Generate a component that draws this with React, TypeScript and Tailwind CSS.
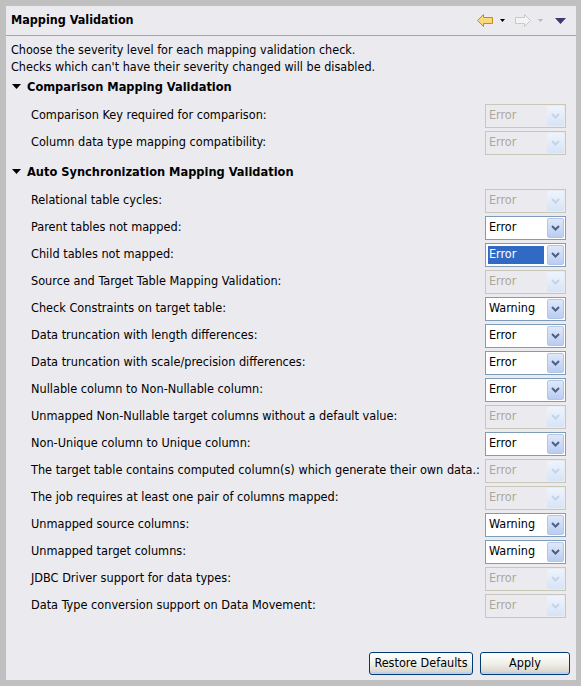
import React from 'react';

type Sev = 'Error' | 'Warning';

interface Row {
  label: string;
  value: Sev;
  disabled?: boolean;
  selected?: boolean;
}

const comparisonRows: Row[] = [
  { label: 'Comparison Key required for comparison:', value: 'Error', disabled: true },
  { label: 'Column data type mapping compatibility:', value: 'Error', disabled: true },
];

const syncRows: Row[] = [
  { label: 'Relational table cycles:', value: 'Error', disabled: true },
  { label: 'Parent tables not mapped:', value: 'Error' },
  { label: 'Child tables not mapped:', value: 'Error', selected: true },
  { label: 'Source and Target Table Mapping Validation:', value: 'Error', disabled: true },
  { label: 'Check Constraints on target table:', value: 'Warning' },
  { label: 'Data truncation with length differences:', value: 'Error' },
  { label: 'Data truncation with scale/precision differences:', value: 'Error' },
  { label: 'Nullable column to Non-Nullable column:', value: 'Error' },
  { label: 'Unmapped Non-Nullable target columns without a default value:', value: 'Error', disabled: true },
  { label: 'Non-Unique column to Unique column:', value: 'Error' },
  { label: 'The target table contains computed column(s) which generate their own data.:', value: 'Error', disabled: true },
  { label: 'The job requires at least one pair of columns mapped:', value: 'Error', disabled: true },
  { label: 'Unmapped source columns:', value: 'Warning' },
  { label: 'Unmapped target columns:', value: 'Warning' },
  { label: 'JDBC Driver support for data types:', value: 'Error', disabled: true },
  { label: 'Data Type conversion support on Data Movement:', value: 'Error', disabled: true },
];

const Chevron: React.FC<{ disabled?: boolean }> = ({ disabled }) => (
  <svg width="9" height="6" viewBox="0 0 9 6">
    <path
      d="M1 1 L4.5 4.5 L8 1"
      fill="none"
      stroke={disabled ? '#c6d3e6' : '#4d6185'}
      strokeWidth="2"
    />
  </svg>
);

const Combo: React.FC<{ row: Row }> = ({ row }) => {
  const { value, disabled, selected } = row;
  return (
    <div
      className={`flex h-[24px] w-[81px] shrink-0 border ${
        disabled ? 'border-[#c9c7ba] bg-[#ebeaef]' : 'border-[#7f9db9] bg-white'
      }`}
    >
      <div className="flex flex-1 items-center p-[2px]">
        <span
          className={`flex h-full w-full items-center pl-[1px] text-[12.5px] ${
            selected ? 'bg-[#316ac5] text-white' : disabled ? 'text-[#aca899]' : 'text-black'
          }`}
        >
          {value}
        </span>
      </div>
      <div
        className={`m-[1px] flex w-[17px] items-center justify-center rounded-[2px] ${
          disabled
            ? 'bg-gradient-to-b from-[#eef4fd] to-[#d6e4f8]'
            : 'border border-[#b4c6e6] bg-gradient-to-b from-[#dfe8fb] to-[#b9cdf1]'
        }`}
      >
        <Chevron disabled={disabled} />
      </div>
    </div>
  );
};

const SectionHeader: React.FC<{ title: string; className?: string }> = ({ title, className }) => (
  <div className={`flex items-center pl-[6px] ${className ?? ''}`}>
    <svg width="9" height="6" viewBox="0 0 9 6" className="mr-[6px]">
      <path d="M0 0 L9 0 L4.5 5 Z" fill="#000" />
    </svg>
    <span className="text-[12.7px] font-bold">{title}</span>
  </div>
);

const SettingRow: React.FC<{ row: Row }> = ({ row }) => (
  <div className="flex h-[27px] items-center justify-between pl-[25px] pr-[10px]">
    <span className="whitespace-nowrap text-[12.6px] text-black">{row.label}</span>
    <Combo row={row} />
  </div>
);

const XpButton: React.FC<{ label: string; className?: string }> = ({ label, className }) => (
  <button
    className={`h-[23px] rounded-[3px] border border-[#003c74] bg-gradient-to-b from-[#ffffff] via-[#f0f0ea] to-[#d6d0c5] text-[12.5px] text-black shadow-[inset_0_-2px_0_#c4cfe6,inset_0_1px_0_#fff] ${className ?? ''}`}
  >
    {label}
  </button>
);

export default function App() {
  return (
    <div
      className="h-[686px] w-[581px] bg-[#c0c0c0] pb-[6px] pl-[6px] pr-[5px] pt-[6px]"
      style={{ fontFamily: '"DejaVu Sans Condensed", "DejaVu Sans", sans-serif' }}
    >
      <div className="flex h-full flex-col bg-[#ebeaef]">
        {/* Header */}
        <div className="flex h-[30px] items-center justify-between border-b border-[#a5a5a8] pl-[5px] pr-[10px]">
          <span className="text-[12.5px] font-bold">Mapping Validation</span>
          <div className="flex items-center">
            <svg width="16" height="13" viewBox="0 0 16 13">
              <path
                d="M0.5 6.5 L6.5 0.5 L6.5 3.5 L15.5 3.5 L15.5 9.5 L6.5 9.5 L6.5 12.5 Z"
                fill="#fbd978"
                stroke="#c98b1b"
              />
            </svg>
            <svg width="5" height="3" viewBox="0 0 5 3" className="ml-[7px]">
              <path d="M0 0 L5 0 L2.5 3 Z" fill="#000" />
            </svg>
            <svg width="16" height="13" viewBox="0 0 16 13" className="ml-[10px]">
              <path
                d="M15.5 6.5 L9.5 0.5 L9.5 3.5 L0.5 3.5 L0.5 9.5 L9.5 9.5 L9.5 12.5 Z"
                fill="#f4f4f4"
                stroke="#c8c8c8"
              />
            </svg>
            <svg width="5" height="3" viewBox="0 0 5 3" className="ml-[7px]">
              <path d="M0 0 L5 0 L2.5 3 Z" fill="#b8b8b8" />
            </svg>
            <svg width="11" height="6" viewBox="0 0 11 6" className="ml-[12px]">
              <path d="M0 0 L11 0 L5.5 6 Z" fill="#3c3a6e" />
            </svg>
          </div>
        </div>

        {/* Description */}
        <div className="mt-[5px] pl-[5px] text-[12.5px] leading-[17px]">
          <div>Choose the severity level for each mapping validation check.</div>
          <div>Checks which can't have their severity changed will be disabled.</div>
        </div>

        <SectionHeader title="Comparison Mapping Validation" className="h-[24px]" />
        <div className="mt-[3px]">
          {comparisonRows.map((r) => (
            <SettingRow key={r.label} row={r} />
          ))}
        </div>

        <SectionHeader title="Auto Synchronization Mapping Validation" className="h-[31px] pt-[1px]" />
        <div>
          {syncRows.map((r) => (
            <SettingRow key={r.label} row={r} />
          ))}
        </div>

        {/* Footer */}
        <div className="mt-auto flex justify-end gap-[7px] pb-[5px] pr-[6px]">
          <XpButton label="Restore Defaults" className="w-[104px]" />
          <XpButton label="Apply" className="w-[90px]" />
        </div>
      </div>
    </div>
  );
}
